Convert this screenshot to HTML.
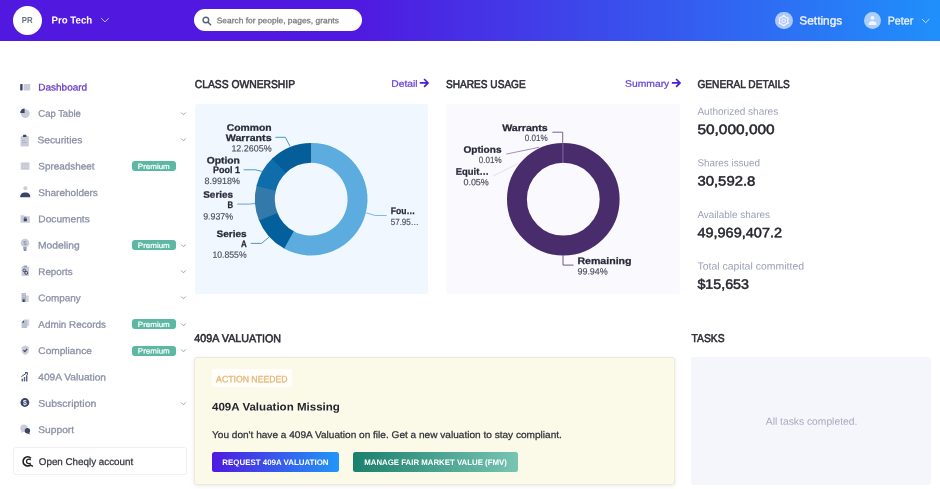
<!DOCTYPE html>
<html lang="en"><head><meta charset="utf-8"><title>Dashboard</title><style>
html,body{margin:0;padding:0}
body{width:940px;height:489px;overflow:hidden;background:#fff;position:relative;font-family:"Liberation Sans",sans-serif}
.t{position:absolute;white-space:nowrap;line-height:1;transform-origin:0 50%;display:block}
.abs{position:absolute;overflow:visible;will-change:transform}
.txt{will-change:transform}
.txt text{font-family:"Liberation Sans",sans-serif;text-rendering:geometricPrecision;white-space:pre}
.hdr{position:absolute;left:0;top:0;width:940px;height:41px;background:linear-gradient(90deg,#5118e0 0%,#5019e0 38%,#1f90fb 100%)}
.avatar{position:absolute;left:12.7px;top:5.7px;width:28.9px;height:28.9px;border-radius:50%;background:#fff}
.search{position:absolute;left:193.6px;top:9.3px;width:168.8px;height:22px;border-radius:11px;background:#fff}
.circ{position:absolute;width:17.4px;height:17.4px;border-radius:50%;background:rgba(255,255,255,.62)}
.prem{position:absolute;left:131.6px;width:44.2px;height:10.1px;border-radius:3px;background:#5cb7a3}
.cheq{position:absolute;left:13px;top:447.4px;width:172.4px;height:25.6px;border:1px solid #f0f0f3;border-radius:3px;background:#fff;box-sizing:content-box}
.card{position:absolute;border-radius:2.5px}
.vcard{position:absolute;left:194.3px;top:357px;width:479px;height:126.4px;border:1px solid #eceadb;border-radius:3px;background:#fbfae8;box-shadow:0 1px 4px rgba(0,0,0,.09);box-sizing:content-box}
.an{position:absolute;left:211.8px;top:368.9px;width:79.9px;height:18.6px;border-radius:3px;background:#fffefb}
.btn1{position:absolute;left:212px;top:452.1px;width:127px;height:20.3px;border-radius:2.5px;background:linear-gradient(90deg,#4f1ae0,#2196f8)}
.btn2{position:absolute;left:353px;top:452.1px;width:164.6px;height:20.3px;border-radius:2.5px;background:linear-gradient(90deg,#1a806c,#78c4b3)}
.tcard{position:absolute;left:691.4px;top:357px;width:240px;height:128.2px;border-radius:3px;background:#f5f6fb}
</style></head><body>
<div class="hdr"></div>
<div class="avatar"></div>
<svg class="abs" style="left:100px;top:16px" width="10" height="8" viewBox="0 0 10 8"><path d="M1.2 2.2 L5 5.9 L8.8 2.2" fill="none" stroke="#c9c2f5" stroke-width="1"/></svg>
<div class="search"></div>
<svg class="abs" style="left:201px;top:15px" width="12" height="12" viewBox="0 0 12 12"><circle cx="4.9" cy="5" r="2.8" fill="none" stroke="#5a6378" stroke-width="1.4"/><path d="M7 7.2 L9.6 9.8" stroke="#5a6378" stroke-width="1.5" stroke-linecap="round"/></svg>
<div class="circ" style="left:775.3px;top:11.5px"></div>
<svg class="abs" style="left:775.3px;top:11.5px" width="17.4" height="17.4" viewBox="-8.7 -8.7 17.4 17.4"><path d="M0.00 -5.10 L2.00 -3.46 L4.42 -2.55 L4.00 -0.00 L4.42 2.55 L2.00 3.46 L0.00 5.10 L-2.00 3.46 L-4.42 2.55 L-4.00 0.00 L-4.42 -2.55 L-2.00 -3.46 Z" fill="none" stroke="#f4f7ff" stroke-width="1.25" stroke-linejoin="round"/><circle cx="0" cy="0" r="1.75" fill="none" stroke="#f4f7ff" stroke-width="1.1"/></svg>
<div class="circ" style="left:863.6px;top:11.5px"></div>
<svg class="abs" style="left:863.6px;top:11.5px" width="17.4" height="17.4" viewBox="0 0 17.4 17.4"><circle cx="8.5" cy="5.9" r="1.95" fill="#f1f5ff"/><path d="M4.4 13.1 C4.4 10.4 6.2 9.1 8.55 9.1 C10.9 9.1 12.7 10.4 12.7 13.1 Z" fill="#f1f5ff"/></svg>
<svg class="abs" style="left:921px;top:16.5px" width="10" height="8" viewBox="0 0 10 8"><path d="M1 2 L4.7 5.7 L8.4 2" fill="none" stroke="#d6e6ff" stroke-width="0.9"/></svg>
<svg class="abs" style="left:20px;top:80.00px" width="12" height="14" viewBox="0 0 12 14"><rect x="0.2" y="4" width="2.4" height="6.4" rx="0.6" fill="#3b4468"/><rect x="3.6" y="4" width="6.6" height="6.4" rx="0.6" fill="#c9ccd8"/></svg>
<svg class="abs" style="left:20px;top:106.35px" width="12" height="14" viewBox="0 0 12 14"><circle cx="5.3" cy="7.6" r="4.4" fill="#c9ccd8"/><path d="M4.6 6.9 L4.6 2.4 A4.5 4.5 0 0 0 0.2 6.9 Z" fill="#3b4468"/></svg>
<svg class="abs" style="left:180px;top:110.75px" width="8" height="6" viewBox="0 0 8 6"><path d="M1.2 1.5 L3.45 3.8 L5.7 1.5" fill="none" stroke="#979cb0" stroke-width="0.95"/></svg>
<svg class="abs" style="left:20px;top:132.70px" width="12" height="14" viewBox="0 0 12 14"><rect x="0.6" y="3" width="8.2" height="10.4" rx="1" fill="#c9ccd8"/><rect x="3" y="1.8" width="3.4" height="2.2" rx="0.6" fill="#3b4468"/><rect x="2.2" y="7" width="3" height="0.8" fill="#aab0c4"/><rect x="2.2" y="9.2" width="5" height="0.8" fill="#aab0c4"/></svg>
<svg class="abs" style="left:180px;top:137.10px" width="8" height="6" viewBox="0 0 8 6"><path d="M1.2 1.5 L3.45 3.8 L5.7 1.5" fill="none" stroke="#979cb0" stroke-width="0.95"/></svg>
<svg class="abs" style="left:20px;top:159.05px" width="12" height="14" viewBox="0 0 12 14"><rect x="0.6" y="3.3" width="9" height="7.7" rx="1" fill="#d3d6e0"/><rect x="2.3" y="5" width="5.6" height="4.3" fill="none" stroke="#b9bdcc" stroke-width="0.7"/><path d="M5.1 5 V9.3" stroke="#b9bdcc" stroke-width="0.7"/></svg>
<div class="prem" style="top:161.15px"></div>
<svg class="abs" style="left:20px;top:185.40px" width="12" height="14" viewBox="0 0 12 14"><circle cx="5.4" cy="3.2" r="2" fill="#c9ccd8"/><path d="M0.2 12.3 C0.2 9 2.4 7.6 5.3 7.6 C8.2 7.6 10.3 9 10.3 12.3 Z" fill="#3b4468"/></svg>
<svg class="abs" style="left:20px;top:211.75px" width="12" height="14" viewBox="0 0 12 14"><path d="M0.6 3.2 H4 L5 4.2 H9.8 V10.8 H0.6 Z" fill="#c9ccd8"/><rect x="3.7" y="6.6" width="3.2" height="2.6" rx="0.4" fill="#3b4468"/><path d="M4.4 6.8 V6.2 A0.9 0.9 0 0 1 6.2 6.2 V6.8" fill="none" stroke="#3b4468" stroke-width="0.7"/></svg>
<svg class="abs" style="left:20px;top:238.10px" width="12" height="14" viewBox="0 0 12 14"><circle cx="5" cy="5" r="4.3" fill="#c9ccd8"/><rect x="3.3" y="9" width="3.4" height="2.6" fill="#9aa1b8"/><rect x="3.8" y="11.6" width="2.4" height="1" fill="#3b4468"/><text x="5" y="7.2" font-size="6" font-family="Liberation Sans,sans-serif" text-anchor="middle" fill="#8088a2">$</text></svg>
<div class="prem" style="top:240.20px"></div>
<svg class="abs" style="left:180px;top:242.50px" width="8" height="6" viewBox="0 0 8 6"><path d="M1.2 1.5 L3.45 3.8 L5.7 1.5" fill="none" stroke="#979cb0" stroke-width="0.95"/></svg>
<svg class="abs" style="left:20px;top:264.45px" width="12" height="14" viewBox="0 0 12 14"><rect x="1.6" y="2.4" width="7.4" height="9.6" rx="0.9" fill="#c9ccd8"/><rect x="3.5" y="1.6" width="3.6" height="1.8" rx="0.5" fill="#9aa1b8"/><circle cx="4.2" cy="6.4" r="1.3" fill="none" stroke="#3b4468" stroke-width="0.9"/><circle cx="6.2" cy="8.8" r="1.5" fill="none" stroke="#3b4468" stroke-width="1"/></svg>
<svg class="abs" style="left:180px;top:268.85px" width="8" height="6" viewBox="0 0 8 6"><path d="M1.2 1.5 L3.45 3.8 L5.7 1.5" fill="none" stroke="#979cb0" stroke-width="0.95"/></svg>
<svg class="abs" style="left:20px;top:290.80px" width="12" height="14" viewBox="0 0 12 14"><rect x="1.6" y="2.2" width="4.4" height="8.8" fill="#a9afc4"/><rect x="6" y="4.6" width="2.8" height="6.4" fill="#d0d3de"/><rect x="2.7" y="8.4" width="2" height="2.6" fill="#3b4468"/><rect x="2.6" y="3.4" width="0.9" height="0.9" fill="#eceef4"/><rect x="4.2" y="3.4" width="0.9" height="0.9" fill="#eceef4"/><rect x="2.6" y="5.4" width="0.9" height="0.9" fill="#eceef4"/><rect x="4.2" y="5.4" width="0.9" height="0.9" fill="#eceef4"/></svg>
<svg class="abs" style="left:180px;top:295.20px" width="8" height="6" viewBox="0 0 8 6"><path d="M1.2 1.5 L3.45 3.8 L5.7 1.5" fill="none" stroke="#979cb0" stroke-width="0.95"/></svg>
<svg class="abs" style="left:20px;top:317.15px" width="12" height="14" viewBox="0 0 12 14"><path d="M4 2.4 H9.2 V9 H4 Z" fill="#d3d6e0"/><path d="M1.6 5.6 L4 3.2 H7.2 V11 H1.6 Z" fill="#bcc1d1"/><path d="M1.6 5.6 H4 V3.2 Z" fill="#3b4468"/></svg>
<div class="prem" style="top:319.25px"></div>
<svg class="abs" style="left:180px;top:321.55px" width="8" height="6" viewBox="0 0 8 6"><path d="M1.2 1.5 L3.45 3.8 L5.7 1.5" fill="none" stroke="#979cb0" stroke-width="0.95"/></svg>
<svg class="abs" style="left:20px;top:343.50px" width="12" height="14" viewBox="0 0 12 14"><path d="M5.2 1.6 L8.8 3 V6.6 C8.8 9 7 10.4 5.2 11 C3.4 10.4 1.6 9 1.6 6.6 V3 Z" fill="#c9ccd8"/><path d="M3.4 6.2 L4.8 7.6 L7.2 4.8" fill="none" stroke="#3b4468" stroke-width="1.1"/></svg>
<div class="prem" style="top:345.60px"></div>
<svg class="abs" style="left:180px;top:347.90px" width="8" height="6" viewBox="0 0 8 6"><path d="M1.2 1.5 L3.45 3.8 L5.7 1.5" fill="none" stroke="#979cb0" stroke-width="0.95"/></svg>
<svg class="abs" style="left:20px;top:369.85px" width="12" height="14" viewBox="0 0 12 14"><rect x="1.6" y="8.6" width="1.4" height="2.8" fill="#596080"/><rect x="3.8" y="7" width="1.4" height="4.4" fill="#596080"/><rect x="6" y="5.2" width="1.4" height="6.2" fill="#596080"/><path d="M1.4 6.6 L6.6 3" stroke="#2b3252" stroke-width="0.9"/><path d="M5 2.6 H7.4 V4.8" fill="none" stroke="#2b3252" stroke-width="0.9"/></svg>
<svg class="abs" style="left:20px;top:396.20px" width="12" height="14" viewBox="0 0 12 14"><circle cx="4.9" cy="6.5" r="4.4" fill="#3b4468"/><text x="4.9" y="9" font-size="6.8" font-weight="700" font-family="Liberation Sans,sans-serif" text-anchor="middle" fill="#e8eaf4">$</text></svg>
<svg class="abs" style="left:180px;top:400.60px" width="8" height="6" viewBox="0 0 8 6"><path d="M1.2 1.5 L3.45 3.8 L5.7 1.5" fill="none" stroke="#979cb0" stroke-width="0.95"/></svg>
<svg class="abs" style="left:20px;top:422.55px" width="12" height="14" viewBox="0 0 12 14"><circle cx="4" cy="5.2" r="3.7" fill="#c9ccd8"/><path d="M1.6 8 L1 10 L3.4 8.8 Z" fill="#c9ccd8"/><circle cx="7.4" cy="7.8" r="2.7" fill="#3b4468"/><path d="M8.8 9.6 L10.2 11.4 L7.4 10.4 Z" fill="#3b4468"/></svg>
<div class="cheq"></div>
<svg class="abs" style="left:21px;top:455px" width="13" height="13" viewBox="0 0 13 13"><path d="M10 3.2 A4.6 4.6 0 1 0 10 9.6" fill="none" stroke="#1d1d22" stroke-width="1.6"/><path d="M9.6 5 A2.3 2.3 0 1 0 9.6 7.8" fill="none" stroke="#1d1d22" stroke-width="1.3"/><path d="M9.4 10.2 L12 11.3" stroke="#1d1d22" stroke-width="1.3"/></svg>
<svg class="abs" style="left:419.0px;top:78.1px" width="11" height="10" viewBox="0 0 11 10"><path d="M0.8 4.9 H8.6 M5.1 1.0 L9.0 4.9 L5.1 8.8" fill="none" stroke="#4c20d2" stroke-width="1.7"/></svg>
<svg class="abs" style="left:671.0px;top:78.1px" width="11" height="10" viewBox="0 0 11 10"><path d="M0.8 4.9 H8.6 M5.1 1.0 L9.0 4.9 L5.1 8.8" fill="none" stroke="#4c20d2" stroke-width="1.7"/></svg>
<div class="card" style="left:194.5px;top:104.3px;width:233.7px;height:189.7px;background:#f0f7fe"></div>
<div class="card" style="left:446px;top:104.3px;width:233.8px;height:189.7px;background:#faf9fe"></div>
<svg class="abs" style="left:0;top:0" width="940" height="489" viewBox="0 0 940 489"><path d="M311.20 142.90 A56.3 56.3 0 1 1 282.99 247.92 L292.96 230.70 A36.4 36.4 0 1 0 311.20 162.80 Z" fill="#5cacdf"/><path d="M284.22 248.62 A56.3 56.3 0 0 1 258.59 219.24 L277.18 212.15 A36.4 36.4 0 0 0 293.76 231.15 Z" fill="#04609c"/><path d="M259.11 220.55 A56.3 56.3 0 0 1 256.80 184.70 L276.03 189.82 A36.4 36.4 0 0 0 277.52 213.01 Z" fill="#3379a9"/><path d="M256.45 186.07 A56.3 56.3 0 0 1 273.02 157.82 L286.51 172.45 A36.4 36.4 0 0 0 275.80 190.71 Z" fill="#106dab"/><path d="M271.99 158.80 A56.3 56.3 0 0 1 311.20 142.90 L311.20 162.80 A36.4 36.4 0 0 0 285.85 173.08 Z" fill="#055d99"/><path d="M275.4 137.3 H285.4 L290 146.3" fill="none" stroke="#3b8dbb" stroke-width="0.9"/><path d="M243.7 169.8 H255.3 L262.5 171.5" fill="none" stroke="#3b8dbb" stroke-width="0.9"/><path d="M237.3 204.1 H249.2 L254.9 203.5" fill="none" stroke="#5a9ac2" stroke-width="0.9"/><path d="M250.8 243.4 H261.5 L269 237.2" fill="none" stroke="#3b8dbb" stroke-width="0.9"/><path d="M366.2 212.9 L375.2 215.5 H386.6" fill="none" stroke="#6cb4e2" stroke-width="0.9"/><circle cx="563.3" cy="199.2" r="46.349999999999994" fill="none" stroke="#492c6c" stroke-width="19.9"/><path d="M562.9 142.89999999999998 V162.79999999999998" stroke="#8f7aa8" stroke-width="0.8"/><path d="M552.3 132.2 H562.7 V142.89999999999998" fill="none" stroke="#6a4f8c" stroke-width="0.9"/><path d="M506.3 154.1 L539 147.3" fill="none" stroke="#8a74a6" stroke-width="0.8"/><path d="M493 176 L517.5 163.8" fill="none" stroke="#ddd5ea" stroke-width="0.8"/><path d="M563 255 V265.1 H573.5" fill="none" stroke="#70588f" stroke-width="1"/></svg>
<div class="vcard"></div>
<div class="an"></div>
<div class="btn1"></div>
<div class="btn2"></div>
<div class="tcard"></div>
<svg class="abs txt" style="left:0;top:0" width="940" height="489" viewBox="0 0 940 489">
<text font-size="8.7" fill="#687082" font-weight="700" transform="translate(21.70 22.60) rotate(0.03) scale(0.9019 1)">PR</text>
<text font-size="10.1" fill="#ffffff" font-weight="700" transform="translate(51.50 23.60) rotate(0.03) scale(0.9584 1)">Pro Tech</text>
<text font-size="8.1" fill="#77777c" stroke="#77777c" stroke-width="0.25" transform="translate(216.70 23.20) rotate(0.03) scale(1.0406 1)">Search for people, pages, grants</text>
<text font-size="11.7" fill="#f2f4ff" stroke="#f2f4ff" stroke-width="0.3" transform="translate(799.30 24.50) rotate(0.03) scale(1.0171 1)">Settings</text>
<text font-size="11.4" fill="#f2f4ff" stroke="#f2f4ff" stroke-width="0.25" transform="translate(887.70 24.40) rotate(0.03) scale(0.9358 1)">Peter</text>
<text font-size="9.6" fill="#6a3fc4" stroke="#6a3fc4" stroke-width="0.28" transform="translate(38.30 90.50) rotate(0.03) scale(1.0412 1)">Dashboard</text>
<text font-size="9.6" fill="#8a90a6" stroke="#8a90a6" stroke-width="0.28" transform="translate(38.30 116.85) rotate(0.03) scale(0.9871 1)">Cap Table</text>
<text font-size="9.6" fill="#8a90a6" stroke="#8a90a6" stroke-width="0.28" transform="translate(37.40 143.20) rotate(0.03) scale(1.0652 1)">Securities</text>
<text font-size="9.6" fill="#8a90a6" stroke="#8a90a6" stroke-width="0.28" transform="translate(38.30 169.55) rotate(0.03) scale(1.0323 1)">Spreadsheet</text>
<text font-size="7.6" fill="#ffffff" stroke="#ffffff" stroke-width="0.2" transform="translate(137.80 168.95) rotate(0.03) scale(1.0524 1)">Premium</text>
<text font-size="9.6" fill="#8a90a6" stroke="#8a90a6" stroke-width="0.28" transform="translate(38.30 195.90) rotate(0.03) scale(1.0437 1)">Shareholders</text>
<text font-size="9.6" fill="#8a90a6" stroke="#8a90a6" stroke-width="0.28" transform="translate(38.30 222.25) rotate(0.03) scale(1.0607 1)">Documents</text>
<text font-size="9.6" fill="#8a90a6" stroke="#8a90a6" stroke-width="0.28" transform="translate(37.90 248.60) rotate(0.03) scale(1.0729 1)">Modeling</text>
<text font-size="7.6" fill="#ffffff" stroke="#ffffff" stroke-width="0.2" transform="translate(137.80 248.00) rotate(0.03) scale(1.0524 1)">Premium</text>
<text font-size="9.6" fill="#8a90a6" stroke="#8a90a6" stroke-width="0.28" transform="translate(38.30 274.95) rotate(0.03) scale(1.0234 1)">Reports</text>
<text font-size="9.6" fill="#8a90a6" stroke="#8a90a6" stroke-width="0.28" transform="translate(38.30 301.30) rotate(0.03) scale(1.0344 1)">Company</text>
<text font-size="9.6" fill="#8a90a6" stroke="#8a90a6" stroke-width="0.28" transform="translate(38.30 327.65) rotate(0.03) scale(1.0316 1)">Admin Records</text>
<text font-size="7.6" fill="#ffffff" stroke="#ffffff" stroke-width="0.2" transform="translate(137.80 327.05) rotate(0.03) scale(1.0524 1)">Premium</text>
<text font-size="9.6" fill="#8a90a6" stroke="#8a90a6" stroke-width="0.28" transform="translate(38.30 354.00) rotate(0.03) scale(1.0574 1)">Compliance</text>
<text font-size="7.6" fill="#ffffff" stroke="#ffffff" stroke-width="0.2" transform="translate(137.80 353.40) rotate(0.03) scale(1.0524 1)">Premium</text>
<text font-size="9.6" fill="#8a90a6" stroke="#8a90a6" stroke-width="0.28" transform="translate(38.30 380.35) rotate(0.03) scale(1.0598 1)">409A Valuation</text>
<text font-size="9.6" fill="#8a90a6" stroke="#8a90a6" stroke-width="0.28" transform="translate(38.30 406.70) rotate(0.03) scale(1.0998 1)">Subscription</text>
<text font-size="9.6" fill="#8a90a6" stroke="#8a90a6" stroke-width="0.28" transform="translate(38.30 433.05) rotate(0.03) scale(1.0647 1)">Support</text>
<text font-size="9.8" fill="#33363f" stroke="#33363f" stroke-width="0.25" transform="translate(38.80 465.00) rotate(0.03) scale(1.0016 1)">Open Cheqly account</text>
<text font-size="11.3" fill="#2b2c35" stroke="#2b2c35" stroke-width="0.55" transform="translate(194.70 88.40) rotate(0.03) scale(0.9137 1)">CLASS OWNERSHIP</text>
<text font-size="11.3" fill="#2b2c35" stroke="#2b2c35" stroke-width="0.55" transform="translate(446.10 88.40) rotate(0.03) scale(0.8926 1)">SHARES USAGE</text>
<text font-size="11.3" fill="#2b2c35" stroke="#2b2c35" stroke-width="0.55" transform="translate(697.40 88.40) rotate(0.03) scale(0.8982 1)">GENERAL DETAILS</text>
<text font-size="11.3" fill="#2b2c35" stroke="#2b2c35" stroke-width="0.55" transform="translate(194.30 342.10) rotate(0.03) scale(0.9509 1)">409A VALUATION</text>
<text font-size="11.3" fill="#2b2c35" stroke="#2b2c35" stroke-width="0.55" transform="translate(691.60 342.10) rotate(0.03) scale(0.9085 1)">TASKS</text>
<text font-size="9.3" fill="#6b45d8" stroke="#6b45d8" stroke-width="0.25" transform="translate(391.30 86.80) rotate(0.03) scale(1.1061 1)">Detail</text>
<text font-size="9.3" fill="#6b45d8" stroke="#6b45d8" stroke-width="0.25" transform="translate(625.10 86.80) rotate(0.03) scale(1.1108 1)">Summary</text>
<text font-size="9.4" fill="#272838" font-weight="700" stroke="#272838" stroke-width="0.25" transform="translate(226.70 130.70) rotate(0.03) scale(1.1048 1)">Common</text>
<text font-size="9.4" fill="#272838" font-weight="700" stroke="#272838" stroke-width="0.25" transform="translate(225.70 140.90) rotate(0.03) scale(1.1387 1)">Warrants</text>
<text font-size="9.15" fill="#4c4e5c" stroke="#4c4e5c" stroke-width="0.15" transform="translate(231.40 151.60) rotate(0.03) scale(0.9779 1)">12.2605%</text>
<text font-size="9.4" fill="#272838" font-weight="700" stroke="#272838" stroke-width="0.25" transform="translate(206.70 163.40) rotate(0.03) scale(1.0997 1)">Option</text>
<text font-size="9.4" fill="#272838" font-weight="700" stroke="#272838" stroke-width="0.25" transform="translate(213.00 173.00) rotate(0.03) scale(0.9573 1)">Pool 1</text>
<text font-size="9.15" fill="#4c4e5c" stroke="#4c4e5c" stroke-width="0.15" transform="translate(204.60 183.90) rotate(0.03) scale(0.9800 1)">8.9918%</text>
<text font-size="9.4" fill="#272838" font-weight="700" stroke="#272838" stroke-width="0.25" transform="translate(203.20 197.80) rotate(0.03) scale(1.0629 1)">Series</text>
<text font-size="9.4" fill="#272838" font-weight="700" stroke="#272838" stroke-width="0.25" transform="translate(227.60 208.10) rotate(0.03) scale(0.8249 1)">B</text>
<text font-size="9.15" fill="#4c4e5c" stroke="#4c4e5c" stroke-width="0.15" transform="translate(203.20 219.40) rotate(0.03) scale(0.9667 1)">9.937%</text>
<text font-size="9.4" fill="#272838" font-weight="700" stroke="#272838" stroke-width="0.25" transform="translate(216.50 237.00) rotate(0.03) scale(1.0700 1)">Series</text>
<text font-size="9.4" fill="#272838" font-weight="700" stroke="#272838" stroke-width="0.25" transform="translate(240.90 247.20) rotate(0.03) scale(0.8544 1)">A</text>
<text font-size="9.15" fill="#4c4e5c" stroke="#4c4e5c" stroke-width="0.15" transform="translate(212.40 257.80) rotate(0.03) scale(0.9495 1)">10.855%</text>
<text font-size="9.4" fill="#272838" font-weight="700" stroke="#272838" stroke-width="0.25" transform="translate(390.70 213.80) rotate(0.03) scale(0.9126 1)">Fou…</text>
<text font-size="9.15" fill="#4c4e5c" stroke="#4c4e5c" stroke-width="0.15" transform="translate(390.70 224.80) rotate(0.03) scale(0.8799 1)">57.95…</text>
<text font-size="9.4" fill="#272838" font-weight="700" stroke="#272838" stroke-width="0.25" transform="translate(502.20 131.10) rotate(0.03) scale(1.1288 1)">Warrants</text>
<text font-size="9.15" fill="#4c4e5c" stroke="#4c4e5c" stroke-width="0.15" transform="translate(524.70 141.30) rotate(0.03) scale(0.8904 1)">0.01%</text>
<text font-size="9.4" fill="#272838" font-weight="700" stroke="#272838" stroke-width="0.25" transform="translate(463.40 152.80) rotate(0.03) scale(1.0758 1)">Options</text>
<text font-size="9.15" fill="#4c4e5c" stroke="#4c4e5c" stroke-width="0.15" transform="translate(478.70 163.00) rotate(0.03) scale(0.8827 1)">0.01%</text>
<text font-size="9.4" fill="#272838" font-weight="700" stroke="#272838" stroke-width="0.25" transform="translate(455.80 174.70) rotate(0.03) scale(1.0062 1)">Equit…</text>
<text font-size="9.15" fill="#4c4e5c" stroke="#4c4e5c" stroke-width="0.15" transform="translate(463.40 185.30) rotate(0.03) scale(0.9829 1)">0.05%</text>
<text font-size="9.4" fill="#272838" font-weight="700" stroke="#272838" stroke-width="0.25" transform="translate(577.40 264.00) rotate(0.03) scale(1.1300 1)">Remaining</text>
<text font-size="9.15" fill="#4c4e5c" stroke="#4c4e5c" stroke-width="0.15" transform="translate(577.40 274.50) rotate(0.03) scale(0.9828 1)">99.94%</text>
<text font-size="10.2" fill="#9ba1b6" transform="translate(697.40 114.70) rotate(0.03) scale(0.9840 1)">Authorized shares</text>
<text font-size="13.6" fill="#25262f" stroke="#25262f" stroke-width="0.5" transform="translate(697.40 134.00) rotate(0.03) scale(1.1356 1)">50,000,000</text>
<text font-size="10.2" fill="#9ba1b6" transform="translate(697.40 166.30) rotate(0.03) scale(0.9700 1)">Shares issued</text>
<text font-size="13.6" fill="#25262f" stroke="#25262f" stroke-width="0.5" transform="translate(697.40 185.60) rotate(0.03) scale(1.0956 1)">30,592.8</text>
<text font-size="10.2" fill="#9ba1b6" transform="translate(697.40 217.90) rotate(0.03) scale(0.9724 1)">Available shares</text>
<text font-size="13.6" fill="#25262f" stroke="#25262f" stroke-width="0.5" transform="translate(697.40 237.20) rotate(0.03) scale(1.0666 1)">49,969,407.2</text>
<text font-size="10.2" fill="#9ba1b6" transform="translate(697.40 269.50) rotate(0.03) scale(1.0294 1)">Total capital committed</text>
<text font-size="13.6" fill="#25262f" stroke="#25262f" stroke-width="0.5" transform="translate(697.40 288.80) rotate(0.03) scale(1.0496 1)">$15,653</text>
<text font-size="9.2" fill="#e5b672" stroke="#e5b672" stroke-width="0.3" transform="translate(216.10 382.20) rotate(0.03) scale(0.9464 1)">ACTION NEEDED</text>
<text font-size="11.0" fill="#23242e" font-weight="700" transform="translate(212.00 410.50) rotate(0.03) scale(1.0496 1)">409A Valuation Missing</text>
<text font-size="9.7" fill="#2f3039" stroke="#2f3039" stroke-width="0.25" transform="translate(212.00 437.90) rotate(0.03) scale(1.0403 1)">You don&#x27;t have a 409A Valuation on file. Get a new valuation to stay compliant.</text>
<text font-size="8" fill="#ffffff" font-weight="700" transform="translate(222.30 465.00) rotate(0.03) scale(0.9886 1)">REQUEST 409A VALUATION</text>
<text font-size="8" fill="#ffffff" font-weight="700" transform="translate(364.20 465.00) rotate(0.03) scale(0.9792 1)">MANAGE FAIR MARKET VALUE (FMV)</text>
<text font-size="10.2" fill="#a4a9bd" transform="translate(765.80 424.70) rotate(0.03) scale(1.0099 1)">All tasks completed.</text>
</svg>
</body></html>
